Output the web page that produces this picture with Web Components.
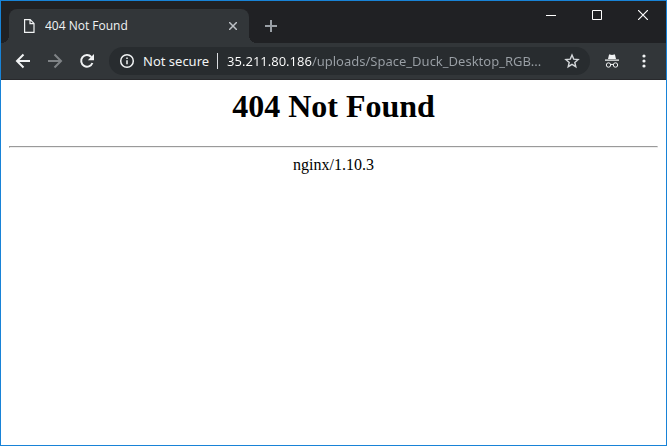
<!DOCTYPE html>
<html lang="en">
<head>
<meta charset="utf-8">
<meta name="viewport" content="width=device-width, initial-scale=1">
<title>404 Not Found</title>
<style>
  :root{
    --edge:#1883d7;
    --frame:#202124;
    --bar:#323639;
    --field:#282c2f;
    --ink:#f1f3f4;
    --muted:#9aa0a6;
  }
  body{ margin:0; font-family:"Open Sans", "Noto Sans", sans-serif; }
</style>
</head>
<body>
<browser-window>
  <tab-strip slot="tabs">
    <browser-tab>404 Not Found</browser-tab>
  </tab-strip>
  <nav-toolbar slot="toolbar">
    <address-bar status="Not secure" host="35.211.80.186" path="/uploads/Space_Duck_Desktop_RGB..."></address-bar>
  </nav-toolbar>
  <error-page server="nginx/1.10.3">404 Not Found</error-page>
</browser-window>

<script>
class BrowserWindow extends HTMLElement{
  constructor(){
    super();
    this.attachShadow({mode:'open'});
    this.shadowRoot.innerHTML = `
      <style>
        :host{
          display:flex; flex-direction:column; box-sizing:border-box;
          min-height:100vh; border:1px solid var(--edge); background:#fff;
        }
        main{ flex:1; }
      </style>
      <slot name="tabs"></slot>
      <slot name="toolbar"></slot>
      <main><slot></slot></main>
    `;
  }
}
customElements.define('browser-window', BrowserWindow);

class IconButton extends HTMLElement{
  constructor(){
    super();
    this.attachShadow({mode:'open'});
    this.shadowRoot.innerHTML = `
      <style>
        :host{ display:block; flex:none; width:28px; height:28px; color:var(--ink); }
        button{
          display:flex; align-items:center; justify-content:center;
          width:100%; height:100%; padding:0; border:0; border-radius:14px;
          background:none; color:inherit;
        }
        button:enabled:hover{ background:rgba(255,255,255,.1); }
      </style>
      <button type="button"><slot></slot></button>
    `;
  }
  connectedCallback(){
    const button = this.shadowRoot.querySelector('button');
    button.setAttribute('aria-label', this.getAttribute('label') || '');
    button.disabled = this.hasAttribute('disabled');
  }
}
customElements.define('icon-button', IconButton);

class TabStrip extends HTMLElement{
  constructor(){
    super();
    this.attachShadow({mode:'open'});
    this.shadowRoot.innerHTML = `
      <style>
        :host{ display:flex; align-items:flex-start; background:var(--frame); }
        .tabs{ display:flex; flex:0 1 240px; min-width:0; padding:8px 0 0 8px; }
        .add{ margin:11px 0 0 8px; color:var(--muted); }
        .controls{ display:flex; margin-left:auto; }
        .controls icon-button{ width:46px; height:28px; color:#fff; }
        svg{ display:block; fill:none; stroke:currentColor; }
      </style>
      <div class="tabs"><slot></slot></div>
      <icon-button class="add" label="New tab">
        <svg width="12" height="12" viewBox="0 0 12 12" stroke-width="2"><path d="M6 0v12M0 6h12"/></svg>
      </icon-button>
      <div class="controls">
        <icon-button label="Minimize">
          <svg width="10" height="10" viewBox="0 0 10 10"><path d="M0 5.5h10"/></svg>
        </icon-button>
        <icon-button label="Maximize">
          <svg width="10" height="10" viewBox="0 0 10 10"><path d="M.5.5h9v9h-9z"/></svg>
        </icon-button>
        <icon-button label="Close">
          <svg width="10" height="10" viewBox="0 0 10 10" stroke-width="1.2"><path d="M0 0l10 10M10 0L0 10"/></svg>
        </icon-button>
      </div>
    `;
  }
}
customElements.define('tab-strip', TabStrip);

class BrowserTab extends HTMLElement{
  constructor(){
    super();
    this.attachShadow({mode:'open'});
    this.shadowRoot.innerHTML = `
      <style>
        :host{
          position:relative; display:flex; align-items:center; flex:1; min-width:0;
          height:34px; box-sizing:border-box; padding:0 2px 0 14px;
          background:var(--bar); border-radius:8px 8px 0 0; color:var(--ink);
          font-size:12px; line-height:16px;
        }
        /* curved feet where the tab meets the toolbar */
        :host::before, :host::after{
          content:""; position:absolute; bottom:0; width:8px; height:8px;
        }
        :host::before{ right:100%; background:radial-gradient(circle at 0 0, transparent 8px, var(--bar) 8px); }
        :host::after{ left:100%; background:radial-gradient(circle at 100% 0, transparent 8px, var(--bar) 8px); }
        .title{ flex:1; min-width:0; margin-left:8px; overflow:hidden; white-space:nowrap; }
        svg{ display:block; flex:none; fill:none; stroke:currentColor; }
        icon-button{ color:#bdc1c6; }
      </style>
      <svg width="14" height="14" viewBox="0 0 14 14" stroke-width="1.2"><path d="M1.6.6h5.6l3.8 3.8v9H1.6zM7 .6v4h4"/></svg>
      <span class="title"><slot></slot></span>
      <icon-button label="Close tab">
        <svg width="8" height="8" viewBox="0 0 8 8" stroke-width="1.5"><path d="M0 0l8 8M8 0L0 8"/></svg>
      </icon-button>
    `;
  }
}
customElements.define('browser-tab', BrowserTab);

class NavToolbar extends HTMLElement{
  constructor(){
    super();
    this.attachShadow({mode:'open'});
    this.shadowRoot.innerHTML = `
      <style>
        :host{
          display:flex; align-items:center; gap:4px; padding:4px 8px;
          background:var(--bar); border-bottom:1px solid #28292c;
        }
        ::slotted(address-bar){ flex:1; min-width:0; margin:0 4px; }
        svg{ display:block; fill:none; stroke:currentColor; }
        [disabled]{ color:#7f8386; }
      </style>
      <icon-button label="Back">
        <svg width="16" height="16" viewBox="0 0 16 16" stroke-width="2"><path d="M15 8H2.5M8.5 1.5L2 8l6.5 6.5"/></svg>
      </icon-button>
      <icon-button label="Forward" disabled>
        <svg width="16" height="16" viewBox="0 0 16 16" stroke-width="2"><path d="M1 8h12.5M7.5 1.5L14 8l-6.5 6.5"/></svg>
      </icon-button>
      <icon-button label="Reload">
        <svg width="16" height="16" viewBox="0 0 16 16" stroke-width="2"><path d="M13.4 10A5.8 5.8 0 1 1 12.3 4"/><path d="M15 1v6.2H8.8z" fill="currentColor" stroke="none"/></svg>
      </icon-button>
      <slot></slot>
      <icon-button label="Incognito">
        <svg width="14" height="14" viewBox="0 0 14 14"><path d="M3 5l1-4.2q.2-.6.8-.4L7 1l2.200-.6q.6-.2.8.4L11 5zM0 5.500h14v1.300H0z" fill="currentColor" stroke="none"/><circle cx="3.5" cy="11" r="2.2"/><circle cx="10.5" cy="11" r="2.2"/><path d="M5.7 10.7q1.3-.8 2.6 0"/></svg>
      </icon-button>
      <icon-button label="Menu">
        <svg width="4" height="14" viewBox="0 0 4 14"><g fill="currentColor" stroke="none"><circle cx="2" cy="2" r="1.6"/><circle cx="2" cy="7" r="1.6"/><circle cx="2" cy="12" r="1.6"/></g></svg>
      </icon-button>
    `;
  }
}
customElements.define('nav-toolbar', NavToolbar);

class AddressBar extends HTMLElement{
  constructor(){
    super();
    this.attachShadow({mode:'open'});
    this.shadowRoot.innerHTML = `
      <style>
        :host{
          display:flex; align-items:center; height:28px; box-sizing:border-box;
          padding:0 4px 0 10px; border-radius:14px; background:var(--field);
          color:var(--ink); font-family:"Noto Sans", "Open Sans", sans-serif;
          font-size:13px; line-height:20px;
        }
        svg{ display:block; flex:none; fill:none; stroke:currentColor; }
        label{
          display:flex; align-items:center; gap:8px; flex:none;
          padding-right:9px; white-space:nowrap;
        }
        .rule{ width:1px; height:16px; background:#dadce0; }
        /* host part is bright, the rest of the address is dimmed */
        input{
          flex:1; min-width:0; height:20px; padding:0; border:0; outline:0;
          font:inherit; color:transparent; caret-color:var(--ink);
          background:linear-gradient(to right, #fff var(--host-width), var(--muted) var(--host-width));
          -webkit-background-clip:text; background-clip:text;
        }
        icon-button{ color:#d5d8db; }
      </style>
      <label for="url">
        <svg width="16" height="16" viewBox="0 0 16 16" stroke-width="1.5"><circle cx="8" cy="8" r="6.3"/><path d="M8 7.200v4M8 4.500v1.500"/></svg>
        <span class="status"></span>
        <span class="rule"></span>
      </label>
      <input id="url" type="text" spellcheck="false">
      <icon-button label="Bookmark this page">
        <svg width="16" height="16" viewBox="0 0 16 16" stroke-width="1.4"><path d="M8 2l1.7 4.1 4.4.4-3.3 2.9 1 4.3L8 11.4l-3.8 2.3 1-4.3-3.3-2.9 4.4-.4z"/></svg>
      </icon-button>
    `;
  }
  connectedCallback(){
    const host = this.getAttribute('host') || '';
    const path = this.getAttribute('path') || '';
    const input = this.shadowRoot.querySelector('input');
    this.shadowRoot.querySelector('.status').textContent = this.getAttribute('status') || '';
    input.value = host + path;

    const ctx = document.createElement('canvas').getContext('2d');
    ctx.font = getComputedStyle(input).font;
    input.style.setProperty('--host-width', Math.round(ctx.measureText(host).width) + 'px');
  }
}
customElements.define('address-bar', AddressBar);

class ErrorPage extends HTMLElement{
  constructor(){
    super();
    this.attachShadow({mode:'open'});
    this.shadowRoot.innerHTML = `
      <style>
        :host{
          display:block; padding:8px; color:#000; text-align:center;
          font:16px/18px "Liberation Serif", "Times New Roman", serif;
        }
        h1{ margin:0 0 21px; font-size:32px; line-height:37px; font-weight:700; }
        hr{ margin:0 0 8px; border:1px solid; border-color:#9a9a9a #eee #eee #9a9a9a; }
        p{ margin:0; }
      </style>
      <h1><slot></slot></h1>
      <hr>
      <p></p>
    `;
  }
  connectedCallback(){
    this.shadowRoot.querySelector('p').textContent = this.getAttribute('server') || '';
  }
}
customElements.define('error-page', ErrorPage);
</script>
</body>
</html>
